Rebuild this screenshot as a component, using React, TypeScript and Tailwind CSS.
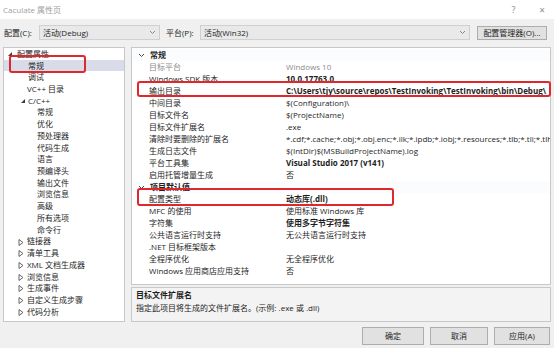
import React from "react";

const Down = () => (
  <svg width="6" height="6" viewBox="0 0 6 6" className="block">
    <path d="M5 1 L5 5 L1 5 Z" fill="#3c3c3c" />
  </svg>
);
const Right = () => (
  <svg width="6" height="7" viewBox="0 0 6 7" className="block">
    <path d="M1 0.5 L5 3.5 L1 6.5 Z" fill="none" stroke="#555" strokeWidth="0.9" />
  </svg>
);
const Chev = ({ c = "#555" }: { c?: string }) => (
  <svg width="7" height="5" viewBox="0 0 7 5" className="block">
    <path d="M1 1 L3.5 3.5 L6 1" fill="none" stroke={c} strokeWidth="1" />
  </svg>
);

type Tree = { t: string; x: number; ix?: number; icon?: "down" | "right"; sel?: boolean };
const tree: Tree[] = [
  { t: "配置属性", x: 17, ix: 7, icon: "down" },
  { t: "常规", x: 28, sel: true },
  { t: "调试", x: 28 },
  { t: "VC++ 目录", x: 27 },
  { t: "C/C++", x: 28, ix: 20, icon: "down" },
  { t: "常规", x: 37 },
  { t: "优化", x: 37 },
  { t: "预处理器", x: 37 },
  { t: "代码生成", x: 37 },
  { t: "语言", x: 37 },
  { t: "预编译头", x: 37 },
  { t: "输出文件", x: 37 },
  { t: "浏览信息", x: 37 },
  { t: "高级", x: 37 },
  { t: "所有选项", x: 37 },
  { t: "命令行", x: 37 },
  { t: "链接器", x: 27, ix: 18, icon: "right" },
  { t: "清单工具", x: 27, ix: 18, icon: "right" },
  { t: "XML 文档生成器", x: 27, ix: 18, icon: "right" },
  { t: "浏览信息", x: 27, ix: 18, icon: "right" },
  { t: "生成事件", x: 27, ix: 18, icon: "right" },
  { t: "自定义生成步骤", x: 27, ix: 18, icon: "right" },
  { t: "代码分析", x: 27, ix: 18, icon: "right" },
];

type Row = { h?: string; k?: string; v?: string; b?: boolean; g?: boolean };
const rows: Row[] = [
  { h: "常规" },
  { k: "目标平台", v: "Windows 10", g: true },
  { k: "Windows SDK 版本", v: "10.0.17763.0", b: true },
  { k: "输出目录", v: "C:\\Users\\tjy\\source\\repos\\TestInvoking\\TestInvoking\\bin\\Debug\\", b: true },
  { k: "中间目录", v: "$(Configuration)\\" },
  { k: "目标文件名", v: "$(ProjectName)" },
  { k: "目标文件扩展名", v: ".exe" },
  { k: "清除时要删除的扩展名", v: "*.cdf;*.cache;*.obj;*.obj.enc;*.ilk;*.ipdb;*.iobj;*.resources;*.tlb;*.tli;*.tlh" },
  { k: "生成日志文件", v: "$(IntDir)$(MSBuildProjectName).log" },
  { k: "平台工具集", v: "Visual Studio 2017 (v141)", b: true },
  { k: "启用托管增量生成", v: "否" },
  { h: "项目默认值" },
  { k: "配置类型", v: "动态库(.dll)", b: true },
  { k: "MFC 的使用", v: "使用标准 Windows 库" },
  { k: "字符集", v: "使用多字节字符集", b: true },
  { k: "公共语言运行时支持", v: "无公共语言运行时支持" },
  { k: ".NET 目标框架版本", v: "" },
  { k: "全程序优化", v: "无全程序优化" },
  { k: "Windows 应用商店应用支持", v: "否" },
];

export default function App() {
  return (
    <div className="relative w-[554px] h-[348px] overflow-hidden bg-[#f0f0f0] text-[8px] leading-[12px] text-[#1e1e1e] font-['Open_Sans','Noto_Sans_CJK_SC',sans-serif]">
      {/* title bar */}
      <div className="h-[19px] bg-white flex items-center justify-between pl-[3px] pr-[9px] text-[#a0a0a0]">
        <span className="text-[8px]">Caculate 属性页</span>
        <div className="flex items-center gap-[24px] text-[9px] text-[#8a8a8a]">
          <span>?</span>
          <span className="text-[10px]">×</span>
        </div>
      </div>

      {/* config row */}
      <div className="flex items-center h-[15px] mt-[6px] pl-[4px]">
        <span className="w-[35px]">配置(C):</span>
        <div className="w-[121px] h-[15px] bg-[#e9e9e9] border border-[#d0d0d0] flex items-center justify-between pl-[3px] pr-[3px]">
          <span>活动(Debug)</span>
          <Chev c="#888" />
        </div>
        <span className="ml-[6px] w-[34px]">平台(P):</span>
        <div className="w-[270px] h-[15px] bg-[#e9e9e9] border border-[#d0d0d0] flex items-center justify-between pl-[3px] pr-[3px]">
          <span>活动(Win32)</span>
          <Chev c="#888" />
        </div>
        <div className="ml-[7px] w-[70px] h-[14px] bg-[#e1e1e1] border border-[#adadad] flex items-center justify-center whitespace-nowrap">
          配置管理器(O)...
        </div>
      </div>

      {/* main */}
      <div className="flex mt-[7px] ml-[3px] gap-[6px] h-[275px]">
        {/* tree */}
        <div className="w-[122px] h-full bg-white border border-[#c8c8c8] overflow-hidden">
          {tree.map((r, i) => (
            <div
              key={i}
              className={`relative h-[11.73px] flex items-center ${r.sel ? "bg-[#d9dbe9]" : ""}`}
            >
              {r.icon && (
                <span className="absolute top-[3px]" style={{ left: (r.ix ?? 0) - 4 }}>
                  {r.icon === "down" ? <Down /> : <Right />}
                </span>
              )}
              <span className="whitespace-nowrap" style={{ marginLeft: r.x - 4 }}>
                {r.t}
              </span>
            </div>
          ))}
        </div>

        {/* right */}
        <div className="w-[420px] h-full flex flex-col gap-[2px]">
          <div className="h-[238px] bg-white border border-[#c8c8c8] overflow-hidden pt-[1px]">
            {rows.map((r, i) =>
              r.h ? (
                <div key={i} className="h-[12px] flex items-center font-bold bg-[#fbfcfe]">
                  <span className="ml-[6px] mr-[5px]">
                    <Chev c="#444" />
                  </span>
                  <span>{r.h}</span>
                </div>
              ) : (
                <div key={i} className="h-[12px] flex items-center">
                  <span className={`w-[154px] shrink-0 pl-[17px] whitespace-nowrap ${r.g ? "text-[#8c8c8c]" : ""}`}>
                    {r.k}
                  </span>
                  <span
                    className={`whitespace-nowrap ${r.b ? "font-bold" : ""} ${r.g ? "text-[#8c8c8c]" : ""}`}
                  >
                    {r.v}
                  </span>
                </div>
              )
            )}
          </div>
          <div className="flex-1 bg-[#f3f3f3] border border-[#c8c8c8] pl-[4px] pt-[1px]">
            <div className="font-bold h-[12px] flex items-center">目标文件扩展名</div>
            <div className="h-[13px] flex items-center">指定此项目将生成的文件扩展名。(示例: .exe 或 .dll)</div>
          </div>
        </div>
      </div>

      {/* buttons */}
      <div className="flex justify-end gap-[6px] pr-[4px] mt-[5px]">
        <div className="w-[62px] h-[18px] bg-[#e1e1e1] border border-[#adadad] flex items-center justify-center">确定</div>
        <div className="w-[58px] h-[18px] bg-[#e1e1e1] border border-[#adadad] flex items-center justify-center">取消</div>
        <div className="w-[56px] h-[18px] bg-[#e1e1e1] border border-[#adadad] flex items-center justify-center">应用(A)</div>
      </div>

      {/* red annotation boxes */}
      <div className="absolute left-[9px] top-[55px] w-[77px] h-[18px] border-2 border-[#e0282c] rounded-[3px]" />
      <div className="absolute left-[137px] top-[81px] w-[414px] h-[16px] border-2 border-[#e0282c] rounded-[3px]" />
      <div className="absolute left-[137px] top-[188px] w-[257px] h-[18px] border-2 border-[#e0282c] rounded-[3px]" />
    </div>
  );
}
